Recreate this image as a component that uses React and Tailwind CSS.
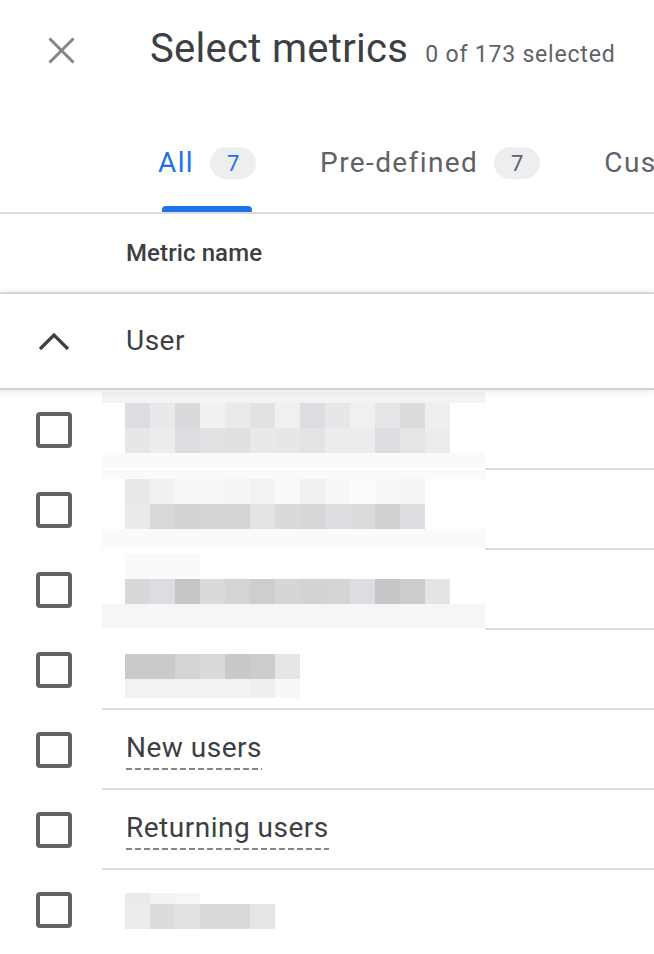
import React from 'react';

const MOSAIC_ROWS = [
  {
    cover: true,
    offset: 'pt-[2px]',
    lines: [
      { h: 'h-[11px]', band: 'bg-[#f2f3f3]' },
      {
        h: 'h-[25px]',
        cells: [
          'bg-[#dcdde0]', 'bg-[#e8e9ea]', 'bg-[#d9dadc]', 'bg-[#f0f1f1]', 'bg-[#e9eaeb]', 'bg-[#e1e2e4]', 'bg-[#eff0f0]',
          'bg-[#dcdde0]', 'bg-[#e6e7e8]', 'bg-[#eff0f0]', 'bg-[#e4e5e7]', 'bg-[#dbdcde]', 'bg-[#eeeff0]',
        ],
      },
      {
        h: 'h-[25px]',
        cells: [
          'bg-[#e6e7e8]', 'bg-[#eceded]', 'bg-[#dcdde0]', 'bg-[#e1e2e4]', 'bg-[#dfe0e2]', 'bg-[#e8e9ea]', 'bg-[#e6e7e9]',
          'bg-[#e2e3e5]', 'bg-[#ebeced]', 'bg-[#ebeced]', 'bg-[#dcdde0]', 'bg-[#e4e5e7]', 'bg-[#ebeced]',
        ],
      },
      { h: 'h-[15px]', band: 'bg-[#fafafa]' },
    ],
  },
  {
    cover: true,
    offset: 'pt-0',
    lines: [
      { h: 'h-[9px]', band: 'bg-[#fafafa]' },
      {
        h: 'h-[25px]',
        cells: [
          'bg-[#e8e9ea]', 'bg-[#f0f1f2]', 'bg-[#f8f8f8]', 'bg-[#f8f8f8]', 'bg-[#f5f5f5]', 'bg-[#f1f2f3]',
          'bg-[#f9f9f9]', 'bg-[#f0f1f2]', 'bg-[#f8f8f8]', 'bg-[#fbfbfb]', 'bg-[#f8f8f8]', 'bg-[#f5f5f5]',
        ],
      },
      {
        h: 'h-[25px]',
        cells: [
          'bg-[#eaebeb]', 'bg-[#d8d9db]', 'bg-[#d1d2d4]', 'bg-[#d3d4d6]', 'bg-[#d3d4d6]', 'bg-[#e3e4e5]',
          'bg-[#d9dadc]', 'bg-[#d6d7d9]', 'bg-[#dcdde0]', 'bg-[#dadbdd]', 'bg-[#cfd0d2]', 'bg-[#dcdde0]',
        ],
      },
      { h: 'h-[19px]', band: 'bg-[#fafafa]' },
    ],
  },
  {
    cover: true,
    offset: 'pt-[4px]',
    lines: [
      { h: 'h-[25px]', cells: ['bg-[#fafafa]', 'bg-[#fafafa]', 'bg-[#fafafa]'] },
      {
        h: 'h-[25px]',
        cells: [
          'bg-[#d7d8da]', 'bg-[#dcdde0]', 'bg-[#c5c6c8]', 'bg-[#d9dadc]', 'bg-[#d3d4d6]', 'bg-[#cdcecf]', 'bg-[#d5d6d8]',
          'bg-[#d2d3d5]', 'bg-[#d3d4d6]', 'bg-[#dcdde0]', 'bg-[#c5c6c8]', 'bg-[#cbcccd]', 'bg-[#e3e4e5]',
        ],
      },
      { h: 'h-[24px]', band: 'bg-[#f6f6f6]' },
    ],
  },
  {
    cover: false,
    offset: 'pt-[24px]',
    lines: [
      {
        h: 'h-[25px]',
        cells: ['bg-[#c9cacc]', 'bg-[#c9cacc]', 'bg-[#d3d4d6]', 'bg-[#d9dadc]', 'bg-[#c8c9cb]', 'bg-[#cbcccd]', 'bg-[#e5e6e7]'],
      },
      {
        h: 'h-[19px]',
        cells: ['bg-[#f1f2f3]', 'bg-[#f1f2f3]', 'bg-[#f1f2f3]', 'bg-[#f1f2f3]', 'bg-[#f1f2f3]', 'bg-[#eeeff0]', 'bg-[#f8f8f8]'],
      },
    ],
  },
];

const LAST_ROW = {
  cover: false,
  offset: 'pt-[23px]',
  lines: [
    { h: 'h-[11px]', cells: ['bg-[#e9eaeb]', 'bg-[#f3f3f3]', 'bg-[#f6f6f6]'] },
    {
      h: 'h-[25px]',
      cells: ['bg-[#ebeced]', 'bg-[#dbdcde]', 'bg-[#e1e2e3]', 'bg-[#d9dadc]', 'bg-[#d8d9db]', 'bg-[#e5e6e7]'],
    },
  ],
};

function Checkbox() {
  return <div className="h-[36px] w-[36px] rounded-[4px] border-[4px] border-[#5f6368]" />;
}

function Mosaic({ data }) {
  return (
    <div className={`flex flex-col ${data.offset}`}>
      {data.lines.map((line, i) =>
        line.band ? (
          <div key={i} className={`w-full ${line.h} ${line.band}`} />
        ) : (
          <div key={i} className={`flex pl-[23px] ${line.h}`}>
            {line.cells.map((c, j) => (
              <div key={j} className={`h-full w-[25px] ${c}`} />
            ))}
          </div>
        ),
      )}
    </div>
  );
}

function MetricRow({ mosaic, label, last }) {
  const divider = last ? 'border-b-2 border-transparent' : 'border-b-2 border-[#dadce0]';
  const leftDivider = mosaic?.cover ? 'border-b-2 border-transparent' : divider;
  return (
    <div className="flex h-[80px]">
      <div className="flex w-[102px] shrink-0 items-center pl-[36px]">
        <Checkbox />
      </div>
      <div className="flex flex-1">
        <div className={`w-[383px] shrink-0 ${leftDivider}`}>
          {mosaic ? (
            <Mosaic data={mosaic} />
          ) : (
            <div className="pl-[24px] pt-[24px]">
              <div className="inline-flex flex-col">
                <span className="text-[28px] leading-[28px] tracking-[0.5px] text-[#3c4043]">{label}</span>
                <div className="mt-[6px] h-[2px] w-full bg-[repeating-linear-gradient(to_right,#80868b_0px,#80868b_6px,transparent_6px,transparent_9px)]" />
              </div>
            </div>
          )}
        </div>
        <div className={`flex-1 ${divider}`} />
      </div>
    </div>
  );
}

function Tab({ label, count, active }) {
  return (
    <div className="flex shrink-0 flex-col px-[32px]">
      <div className="flex h-[86px] items-center gap-[16px] whitespace-nowrap">
        <span
          className={`text-[28px] leading-none tracking-[1.4px] ${active ? 'text-[#1a73e8]' : 'text-[#5f6368]'}`}
        >
          {label}
        </span>
        {count != null ? (
          <span
            className={`flex h-[32px] w-[46px] items-center justify-center rounded-full bg-[#eceef0] text-[22px] ${
              active ? 'text-[#1a73e8]' : 'text-[#5f6368]'
            }`}
          >
            {count}
          </span>
        ) : null}
      </div>
      <div className={`mx-1 h-[6px] rounded-t-[4px] ${active ? 'bg-[#1a73e8]' : 'bg-transparent'}`} />
    </div>
  );
}

export default function App() {
  return (
    <div className="h-[954px] w-[654px] overflow-hidden bg-white font-[Roboto,'Liberation_Sans',sans-serif] text-[#3c4043]">
      <div className="flex h-[120px] items-start">
        <div className="w-[150px] shrink-0 pl-[48px] pt-[37px]">
          <svg width="27" height="27" viewBox="0 0 27 27" fill="none" stroke="#80868b" strokeWidth="3">
            <line x1="1.5" y1="1.5" x2="25.5" y2="25.5" />
            <line x1="25.5" y1="1.5" x2="1.5" y2="25.5" />
          </svg>
        </div>
        <div className="flex items-baseline whitespace-nowrap pt-[29px]">
          <h1 className="text-[40px] font-normal leading-[40px] tracking-[0.3px] text-[#3c4043]">Select metrics</h1>
          <span className="ml-[17px] text-[23px] tracking-[0.8px] text-[#5f6368]">0 of 173 selected</span>
        </div>
      </div>

      <div className="flex border-b-2 border-[#dadce0] pl-[126px]">
        <Tab label="All" count={7} active />
        <Tab label="Pre-defined" count={7} />
        <Tab label="Custom" count={0} />
      </div>

      <div className="flex h-[80px] items-center border-b-2 border-[#e0e1e2] pl-[126px]">
        <span className="text-[24px] font-medium tracking-[0.1px] text-[#3c4043]">Metric name</span>
      </div>

      <div className="relative z-10 flex h-[96px] items-center border-b-2 border-[#cfd0d2] bg-white shadow-[0_0_8px_rgba(60,64,67,0.18)]">
        <div className="w-[126px] shrink-0 pl-[38px]">
          <svg width="32" height="19" viewBox="0 0 32 19" fill="none" stroke="#3c4043" strokeWidth="3.2">
            <polyline points="2,17 16,3 30,17" />
          </svg>
        </div>
        <span className="text-[28px] leading-[28px] tracking-[0.5px]">User</span>
      </div>

      {MOSAIC_ROWS.map((m, i) => (
        <MetricRow key={i} mosaic={m} />
      ))}
      <MetricRow label="New users" />
      <MetricRow label="Returning users" />
      <MetricRow mosaic={LAST_ROW} last />
    </div>
  );
}
